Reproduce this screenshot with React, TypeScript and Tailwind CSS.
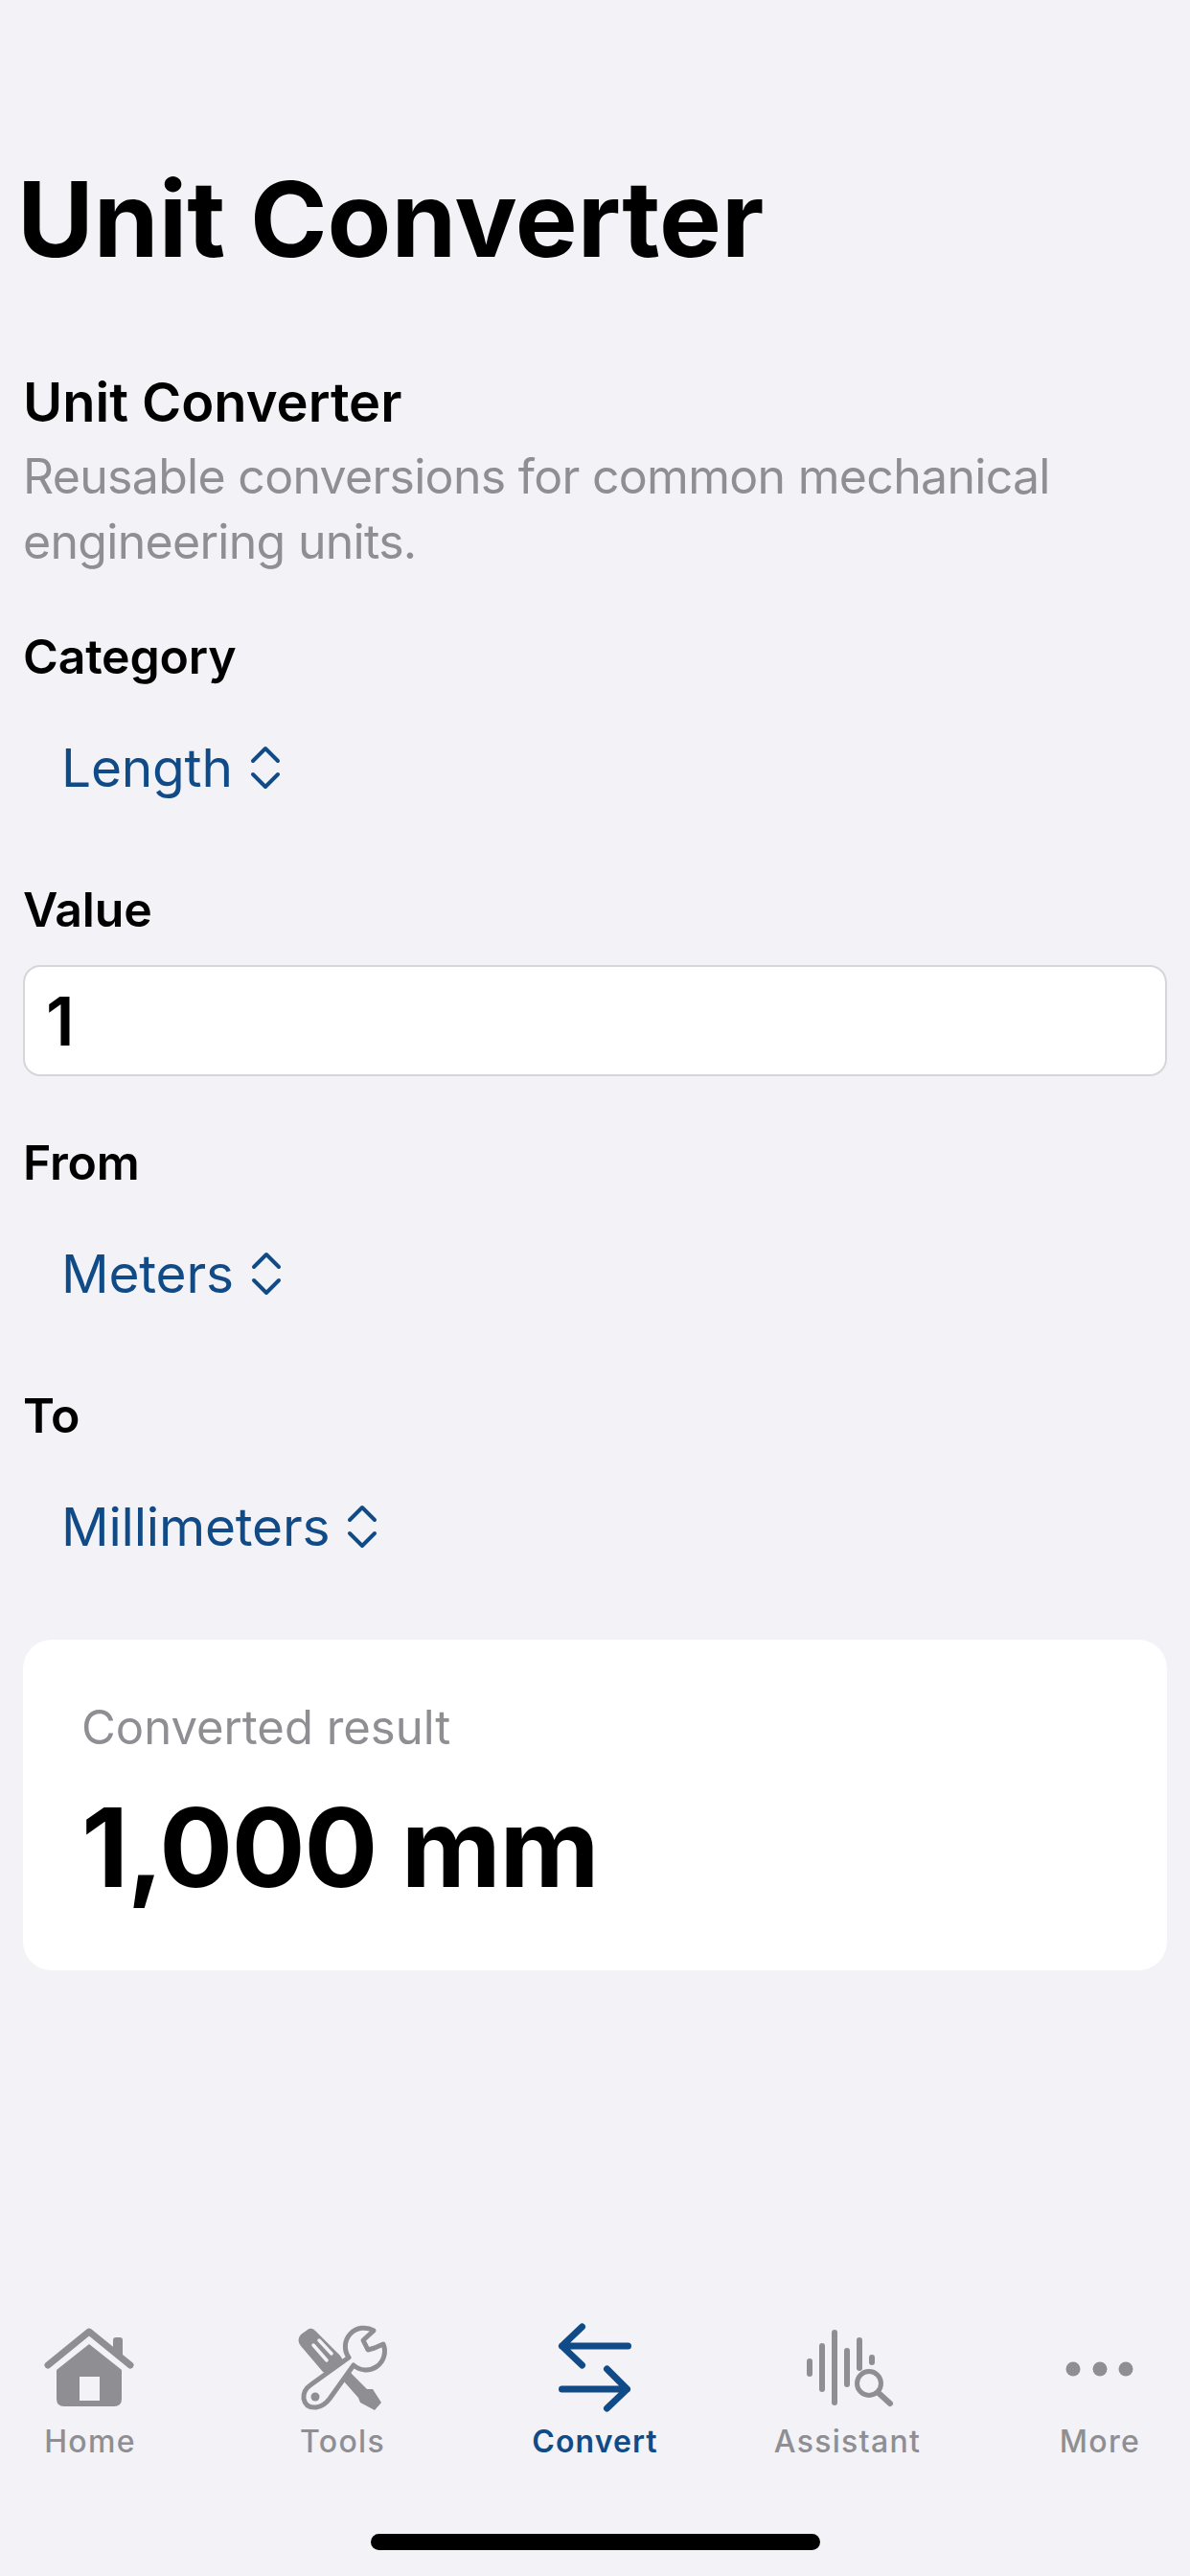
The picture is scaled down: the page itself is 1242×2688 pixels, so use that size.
import React from "react";

const GRAY = "#8e8e93";
const BLUE = "#114b87";
const BG = "#f2f2f7";

function Chevrons() {
  return (
    <svg width="32" height="46" viewBox="0 0 32 46" fill="none" stroke={BLUE} strokeWidth="4" strokeLinecap="round" strokeLinejoin="round">
      <path d="M3 16 L16 3 L29 16" />
      <path d="M3 30 L16 43 L29 30" />
    </svg>
  );
}

function Picker({ label }: { label: string }) {
  return (
    <div className="mt-[28px] flex h-[116px] items-center gap-[18px] pl-[40px]">
      <span className="text-[55px] leading-[70px] font-normal tracking-[-0.2px] text-[#114b87]">{label}</span>
      <Chevrons />
    </div>
  );
}

function Label({ children }: { children: React.ReactNode }) {
  return <div className="h-[60px] text-[50px] leading-[60px] font-semibold tracking-[-0.2px] text-black">{children}</div>;
}

function HomeIcon() {
  return (
    <svg width="130" height="115" viewBox="-1 0 130 115">
      <path d="M20 53 L63 18 L106 53" fill="none" stroke={GRAY} strokeWidth="7" strokeLinecap="round" strokeLinejoin="round" />
      <path d="M88 27 Q88 24 91 24 L95 24 Q98 24 98 27 L98 44 L88 36 Z" fill={GRAY} />
      <path
        fillRule="evenodd"
        d="M63 31 L97 58 L97 88 Q97 96 89 96 L37 96 Q29 96 29 88 L29 58 Z M53 65 L53 90 L74 90 L74 65 Z"
        fill={GRAY}
      />
    </svg>
  );
}

function ToolsIcon() {
  return (
    <svg width="130" height="115" viewBox="2 0 130 115">
      <path
        d="M23 21 L30 16 Q34 13 38 17 L64 43 L76 62 L92 78 L98 78 L107 92 L100 100 L85 92 L83 87 L68 70 L46 60 L23 33 Q18 27 23 21 Z"
        fill={GRAY}
      />
      <path d="M36 32 L50 48 M42 27 L55 41" stroke={BG} strokeWidth="3.5" strokeLinecap="round" fill="none" />
      <path
        d="M99 17 A19.5 19.5 0 0 0 73 45 L34 73 Q25 79 26 88 Q28 98 39 97 Q47 96 53 88 L78 53 A19.5 19.5 0 0 0 109 31 L100 35 L93 37 L88 27 Z"
        fill={BG}
        stroke={GRAY}
        strokeWidth="5"
        strokeLinejoin="round"
      />
      <circle cx="38" cy="86" r="4.5" fill={GRAY} />
    </svg>
  );
}

function ConvertIcon() {
  return (
    <svg width="130" height="115" viewBox="0.5 0 130 115" fill="none" stroke={BLUE} strokeWidth="7" strokeLinecap="round" strokeLinejoin="round">
      <path d="M100 33 L31 33 M52 13 L31 33 L52 53" />
      <path d="M31 78 L99 78 M78 57 L99 78 L78 98" />
    </svg>
  );
}

function AssistantIcon() {
  return (
    <svg width="130" height="115" viewBox="-6 0 130 115" fill="none" stroke={GRAY} strokeLinecap="round">
      <g strokeWidth="6">
        <path d="M19 49 L19 62" />
        <path d="M32 33 L32 78" />
        <path d="M45 19 L45 92" />
        <path d="M58 38 L58 73" />
        <path d="M71 27 L71 56" />
        <path d="M84 45 L84 50" />
      </g>
      <circle cx="81" cy="72" r="12.5" strokeWidth="5" />
      <path d="M92 83 L103 93" strokeWidth="6" />
    </svg>
  );
}

function MoreIcon() {
  return (
    <svg width="130" height="115" viewBox="0 0 130 115" fill={GRAY}>
      <circle cx="37" cy="57" r="7.5" />
      <circle cx="65" cy="57" r="7.5" />
      <circle cx="92" cy="57" r="7.5" />
    </svg>
  );
}

function Tab({ icon, label, active }: { icon: React.ReactNode; label: string; active?: boolean }) {
  return (
    <div className="flex w-[186px] flex-col items-center">
      {icon}
      <span
        className={
          active
            ? "h-[36px] text-[32px] leading-[36px] tracking-[1.1px] font-semibold text-[#114b87]"
            : "h-[36px] text-[32px] leading-[36px] tracking-[1.3px] font-medium text-[#8e8e93]"
        }
      >
        {label}
      </span>
    </div>
  );
}

export default function App() {
  return (
    <div
      className="flex h-[2688px] w-[1242px] flex-col overflow-hidden bg-[#f2f2f7] text-black"
      style={{ fontFamily: "Inter, 'Noto Sans', sans-serif" }}
    >
      <h1 className="ml-[18px] mt-[168px] h-[120px] text-[109px] leading-[120px] font-bold">Unit Converter</h1>

      <main className="flex flex-col px-[24px]">
        <div className="mt-[102px] h-[60px] text-[56px] leading-[60px] font-semibold">Unit Converter</div>
        <p className="mt-[13px] text-[50px] leading-[68px] tracking-[-0.7px] text-[#8e8e93]">
          Reusable conversions for common mechanical
          <br />
          engineering units.
        </p>

        <div className="mt-[56px] flex flex-col gap-[60px]">
          <div>
            <Label>Category</Label>
            <Picker label="Length" />
          </div>
          <div>
            <Label>Value</Label>
            <div className="mt-[28px] flex h-[116px] items-center rounded-[18px] border-2 border-[#d6d6da] bg-white pl-[22px] text-[70px] font-semibold">
              1
            </div>
          </div>
          <div>
            <Label>From</Label>
            <Picker label="Meters" />
          </div>
          <div>
            <Label>To</Label>
            <Picker label="Millimeters" />
          </div>
          <div className="flex h-[345px] flex-col rounded-[30px] bg-white pl-[61px]">
            <div className="mt-[62px] h-[60px] text-[49px] leading-[60px] text-[#8e8e93]">Converted result</div>
            <div className="mt-[30px] h-[130px] text-[114px] leading-[130px] font-bold tracking-[-1.3px]">1,000 mm</div>
          </div>
        </div>
      </main>

      <div className="flex-1" />

      <nav className="flex justify-between px-[1px]">
        <Tab icon={<HomeIcon />} label="Home" />
        <Tab icon={<ToolsIcon />} label="Tools" />
        <Tab icon={<ConvertIcon />} label="Convert" active />
        <Tab icon={<AssistantIcon />} label="Assistant" />
        <Tab icon={<MoreIcon />} label="More" />
      </nav>

      <div className="mb-[27px] mt-[78px] flex justify-center">
        <div className="h-[17px] w-[469px] rounded-full bg-black" />
      </div>
    </div>
  );
}
